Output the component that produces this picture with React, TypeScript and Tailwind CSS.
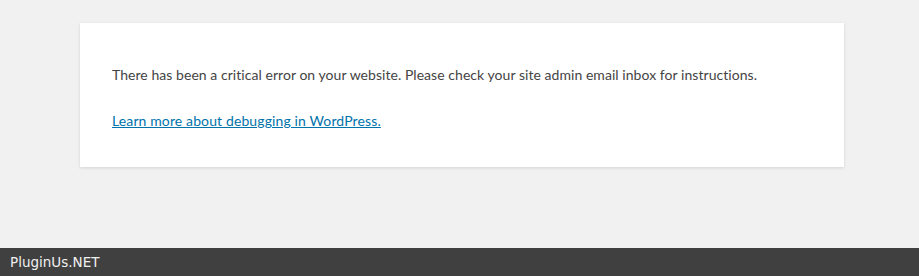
export default function App() {
  return (
    <div className="flex h-[276px] w-full flex-col bg-[#f1f1f1]" style={{ fontFamily: 'Lato, "Open Sans", sans-serif' }}>
      <div className="flex-1 pt-[23px] pl-[80px]">
        <div className="w-[764px] bg-white px-8 py-4 text-[14px] leading-[21px] tracking-[0.05px] text-[#444] shadow-[0_1px_3px_rgba(0,0,0,0.13)]">
          <p className="mt-[25px] mb-[20px]">
            There has been a critical error on your website. Please check your site admin email inbox for instructions.
          </p>
          <p className="mt-[25px] mb-[20px]">
            <a href="#" className="text-[#0073aa] underline tracking-[0.12px]">
              Learn more about debugging in WordPress.
            </a>
          </p>
        </div>
      </div>
      <div className="flex h-[28px] items-center bg-[#404040] px-[10px] text-[13.5px] text-[#f0f0f0]" style={{ fontFamily: '"DejaVu Sans", sans-serif' }}>
        PluginUs.NET
      </div>
    </div>
  );
}
